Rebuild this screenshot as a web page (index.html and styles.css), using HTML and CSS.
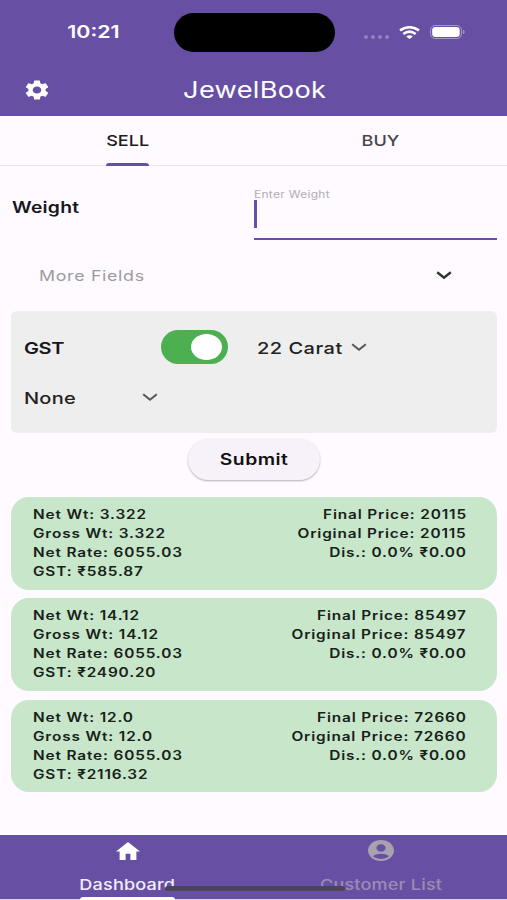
FILE: index.html
```html
<!DOCTYPE html>
<html lang="en">
<head>
<meta charset="utf-8">
<title>JewelBook</title>
<link rel="stylesheet" href="styles.css">
</head>
<body>
<div class="phone">
  <header class="header">
    <div class="status">
      <div class="clock"><span class="t">10:21</span></div>
      <div class="island"></div>
      <div class="signals">
        <svg class="dots" viewBox="0 0 25 4"><g fill="#9583c1"><circle cx="2" cy="2" r="1.900"/><circle cx="9" cy="2" r="1.900"/><circle cx="16" cy="2" r="1.900"/><circle cx="23" cy="2" r="1.900"/></g></svg>
        <svg class="wifi" viewBox="0 0 21 13" preserveAspectRatio="none"><g fill="none" stroke="#fff" stroke-width="2.500"><path d="M1 4.400Q10.500-2 20 4.400"/><path d="M4.300 7.900Q10.500 3.300 16.700 7.900"/></g><path d="M7.200 10.400Q10.500 7.900 13.800 10.400L10.500 13Z" fill="#fff"/></svg>
        <svg class="battery" viewBox="0 0 35 14"><rect x=".5" y=".5" width="31" height="13" rx="4.500" fill="none" stroke="#a497c9"/><rect x="2.200" y="2" width="27.500" height="10" rx="3.200" fill="#fff"/><path d="M33 5v4q1.700-.5 1.700-2T33 5z" fill="#a497c9"/></svg>
      </div>
    </div>
    <div class="appbar">
      <svg class="gear" viewBox="2 2 20 20" preserveAspectRatio="none"><path fill="#fff" d="M19.140 12.940c.04-.3.06-.61.06-.94 0-.32-.02-.64-.07-.94l2.030-1.580c.18-.14.23-.41.12-.61l-1.920-3.320c-.12-.22-.37-.29-.59-.22l-2.390.96c-.5-.38-1.030-.7-1.620-.94l-.36-2.540c-.04-.24-.24-.41-.48-.41h-3.840c-.24 0-.43.17-.47.41l-.36 2.540c-.59.24-1.130.57-1.620.94l-2.390-.96c-.22-.08-.47 0-.59.22L2.740 8.870c-.12.21-.08.47.12.61l2.030 1.580c-.05.3-.09.63-.09.94s.02.64.07.94l-2.030 1.580c-.18.14-.23.41-.12.61l1.920 3.320c.12.22.37.29.59.22l2.390-.96c.5.38 1.030.7 1.620.94l.36 2.540c.05.24.24.41.48.41h3.840c.24 0 .44-.17.47-.41l.36-2.540c.59-.24 1.130-.56 1.620-.94l2.390.96c.22.08.47 0 .59-.22l1.920-3.320c.12-.22.07-.47-.12-.61l-2.010-1.580zM12 15.600c-1.980 0-3.600-1.620-3.600-3.600s1.620-3.600 3.600-3.600 3.600 1.620 3.600 3.600-1.620 3.600-3.600 3.600z"/></svg>
      <h1 class="title"><span class="t">JewelBook</span></h1>
    </div>
  </header>

  <nav class="tabs">
    <div class="tab active"><span class="t">SELL</span></div>
    <div class="tab"><span class="t">BUY</span></div>
  </nav>

  <section class="weight">
    <div class="label"><span class="t left">Weight</span></div>
    <div class="field">
      <div class="hint"><span class="t left">Enter Weight</span></div>
      <div class="caret"></div>
    </div>
  </section>

  <section class="more">
    <span class="t left">More Fields</span>
    <svg class="chev bold" viewBox="0 0 16 9"><path d="M1.200 1.300L8 6.800l6.800-5.500"/></svg>
  </section>

  <section class="panel">
    <div class="gst"><span class="t left">GST</span></div>
    <div class="switch"><div class="thumb"></div></div>
    <div class="carat"><span class="t left">22 Carat</span></div>
    <svg class="chev" viewBox="0 0 16 9"><path d="M1.200 1.300L8 6.800l6.800-5.500"/></svg>
    <div class="none"><span class="t left">None</span></div>
    <svg class="chev" viewBox="0 0 16 9"><path d="M1.200 1.300L8 6.800l6.800-5.500"/></svg>
  </section>

  <button class="submit"><span class="t">Submit</span></button>

  <main class="cards">
    <article class="card">
      <div class="col"><span class="t left">Net Wt: 3.322</span><span class="t left">Gross Wt: 3.322</span><span class="t left">Net Rate: 6055.03</span><span class="t left">GST: ₹585.87</span></div>
      <div class="col end"><span class="t right">Final Price: 20115</span><span class="t right">Original Price: 20115</span><span class="t right">Dis.: 0.0% ₹0.00</span></div>
    </article>
    <article class="card">
      <div class="col"><span class="t left">Net Wt: 14.12</span><span class="t left">Gross Wt: 14.12</span><span class="t left">Net Rate: 6055.03</span><span class="t left">GST: ₹2490.20</span></div>
      <div class="col end"><span class="t right">Final Price: 85497</span><span class="t right">Original Price: 85497</span><span class="t right">Dis.: 0.0% ₹0.00</span></div>
    </article>
    <article class="card">
      <div class="col"><span class="t left">Net Wt: 12.0</span><span class="t left">Gross Wt: 12.0</span><span class="t left">Net Rate: 6055.03</span><span class="t left">GST: ₹2116.32</span></div>
      <div class="col end"><span class="t right">Final Price: 72660</span><span class="t right">Original Price: 72660</span><span class="t right">Dis.: 0.0% ₹0.00</span></div>
    </article>
  </main>

  <footer class="bottom">
    <div class="item on">
      <svg class="home" viewBox="2 3 20 17" preserveAspectRatio="none"><path fill="#fff" d="M10 20v-6h4v6h5v-8h3L12 3 2 12h3v8z"/></svg>
      <span class="t">Dashboard</span>
    </div>
    <div class="item">
      <svg class="user" viewBox="2 2 20 20" preserveAspectRatio="none"><path fill="#a9a0b0" d="M12 2C6.480 2 2 6.480 2 12s4.480 10 10 10 10-4.480 10-10S17.520 2 12 2zm0 4c1.930 0 3.500 1.570 3.500 3.500S13.930 13 12 13s-3.500-1.570-3.500-3.500S10.070 6 12 6zm0 14c-2.030 0-4.430-.82-6.140-2.880C7.550 15.800 9.680 15 12 15s4.450.8 6.140 2.120C16.430 19.180 14.030 20 12 20z"/></svg>
      <span class="t">Customer List</span>
    </div>
    <div class="homebar"></div>
  </footer>
</div>
</body>
</html>
```
FILE: styles.css
```css
* { box-sizing: border-box; }
body { margin: 0; background: #fefaff; font-family: Inter, "Liberation Sans", sans-serif; color: #17161a; }
svg { display: block; flex: none; }
.phone { width: 507px; height: 900px; display: flex; flex-direction: column; overflow: hidden; }

/* Wide letterforms: every label is stretched horizontally around its anchor. */
.t { display: inline-block; white-space: nowrap; transform: scaleX(1.22); transform-origin: center; }
.t.left { transform-origin: left; }
.t.right { transform-origin: right; }

.header { height: 115.500px; flex: none; background: #6750a4; color: #fff; }
.status { height: 64px; display: grid; grid-template-columns: 173.500px 161px 1fr; align-items: center; }
.clock { padding-left: 13px; text-align: center; font-size: 17.500px; font-weight: 600; line-height: 20px; }
.island { height: 39px; border-radius: 20px; background: #000; }
.signals { display: flex; align-items: center; padding-left: 29px; }
.dots { width: 25px; height: 4px; margin-top: 9px; }
.wifi { width: 21px; height: 13px; margin-left: 10px; }
.battery { width: 35px; height: 14px; margin-left: 10px; }
.appbar { height: 51.500px; display: grid; grid-template-columns: 49px 1fr 47px; align-items: center; }
.gear { width: 24px; height: 20px; margin-left: 25px; }
.title { margin: 0; text-align: center; font-size: 22.300px; font-weight: 400; line-height: 30px; letter-spacing: .25px; }

.tabs { height: 50.500px; flex: none; display: grid; grid-template-columns: 1fr 1fr; border-bottom: 1.500px solid #e9e3eb; font-size: 14.800px; font-weight: 500; line-height: 20px; }
.tab { height: 50.500px; display: flex; flex-direction: column; align-items: center; padding: 15px 0 0 1px; color: #48454e; }
.tab.active { color: #1d1b20; }
.tab.active::after { content: ""; width: 43px; height: 3.500px; margin-top: 12px; border-radius: 3px 3px 0 0; background: #6750a4; }

.weight { height: 74px; flex: none; display: grid; grid-template-columns: 242px 243px; padding-left: 12px; }
.label { padding-top: 32px; font-size: 15.800px; font-weight: 600; line-height: 20px; letter-spacing: .2px; margin-left: -.5px; }
.field { height: 74px; padding-top: 22px; border-bottom: 2.500px solid #6750a4; }
.hint { height: 12px; font-size: 9.800px; line-height: 13px; letter-spacing: .25px; color: #b1adb3; }
.caret { width: 2.500px; height: 28px; background: #6750a4; }

.more { height: 71px; flex: none; display: flex; align-items: center; justify-content: space-between; padding: 0 55px 0 38.500px; color: #9c9a9e; font-size: 14.600px; letter-spacing: .55px; }
.chev { width: 16px; height: 9px; fill: none; stroke: #555; stroke-width: 2; }
.chev.bold { stroke: #333; stroke-width: 2.400; }

.panel { height: 122px; flex: none; margin: 0 10px 0 11px; padding: 11px 0 0 13px; display: grid; grid-template-columns: 118px 19px 78px 112px 1fr; grid-template-rows: 50px 51px; align-items: center; border-radius: 6px; background: #eee; font-size: 16.400px; line-height: 20px; letter-spacing: .4px; }
.gst { font-weight: 600; grid-column: 1 / 3; letter-spacing: -.3px; padding-top: 1px; }
.switch { width: 67px; height: 34px; border-radius: 17px; background: #4caf50; padding: 4px 6px 4px 30px; }
.thumb { width: 31px; height: 26px; border-radius: 50%; background: #fff; }
.carat, .none { font-weight: 500; color: #222; }
.carat { margin-left: 18px; padding-top: 1px; }
.none { grid-column: 1; letter-spacing: .2px; }

.submit { width: 132px; height: 41px; flex: none; align-self: center; margin: 6px 0 0 1px; padding: 0; border: 0; border-radius: 21px; background: #f7f2fa; box-shadow: 0 1px 2px rgba(0,0,0,.3); color: #111; font: 600 15.800px/20px Inter, "Liberation Sans", sans-serif; letter-spacing: .4px; }

.cards { flex: 1; display: flex; flex-direction: column; gap: 8.500px; padding: 17px 10px 0 11px; }
.card { height: 92.800px; display: flex; justify-content: space-between; padding: 8px 30.500px 0 21.500px; border-radius: 18px; background: #c8e6c9; font-size: 12.600px; font-weight: 600; line-height: 19px; letter-spacing: .7px; color: #172119; }
.col { display: flex; flex-direction: column; align-items: flex-start; }
.col.end { align-items: flex-end; }

.bottom { position: relative; height: 65.500px; flex: none; display: grid; grid-template-columns: 1fr 1fr; background: #6750a4; border-bottom: 1px solid #d8d0e8; font-size: 14.800px; font-weight: 500; line-height: 20px; letter-spacing: .15px; }
.item { height: 65.500px; display: flex; flex-direction: column; align-items: center; padding-left: 1.500px; color: #9a8db2; }
.item.on { color: #f3eefa; }
.item.on::after { content: ""; width: 95px; height: 3.500px; margin-top: 2px; border-radius: 3px 3px 0 0; background: #fff; }
.home { width: 24px; height: 18px; margin: 7px 0 15px; }
.user { width: 26px; height: 21px; margin: 5px 0 14px; }
.homebar { position: absolute; left: 165px; bottom: 8px; width: 180px; height: 5px; border-radius: 3px; background: #4c445b; }
```
